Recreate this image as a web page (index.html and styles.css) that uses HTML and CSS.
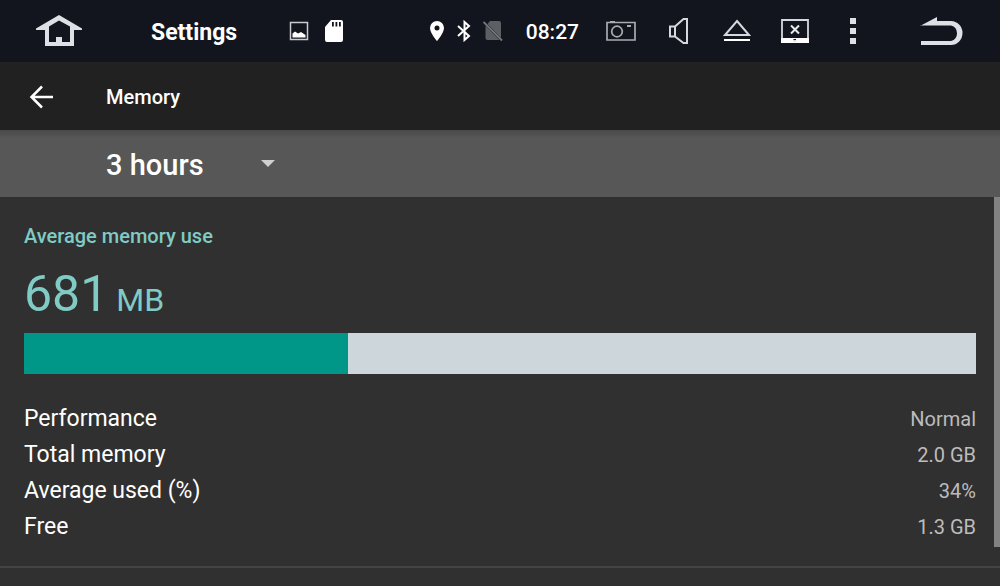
FILE: index.html
```html
<!DOCTYPE html>
<html lang="en">
<head>
<meta charset="utf-8">
<meta name="viewport" content="width=device-width, initial-scale=1">
<title>Memory</title>
<link rel="stylesheet" href="styles.css">
</head>
<body>
<header class="status">
  <button class="home" aria-label="Home">
    <svg width="46" height="32" viewBox="0 0 46 32"><path fill="#dde1e6" fill-rule="evenodd" d="M23 0 46 13.500v1.500h-8v16H9V15H0v-1.500ZM23 5.500 13 11.500v15.500h7v-5h6v5h8V11.500Z"/></svg>
  </button>
  <span class="app-name">Settings</span>
  <div class="notices">
    <svg width="20" height="20" viewBox="0 0 20 20"><path fill="none" stroke="#c9ccd0" stroke-width="1.500" d="M1.500 1.500h17v17h-17z"/><path fill="#fff" d="M3.500 16.500v-4l2.500-2 3 2 3-1.500 4.500 3v2.500Z"/></svg>
    <svg width="18" height="22" viewBox="0 0 18 22"><path fill="#fff" fill-rule="evenodd" d="M6 0h10q2 0 2 2v18q0 2-2 2H2q-2 0-2-2V7ZM7 2v4.500h1.800V2Zm3.500 0v4.500h1.800V2ZM14 2v4.500h1.800V2Z"/></svg>
  </div>
  <div class="signals">
    <svg width="16" height="22" viewBox="0 0 16 22"><path fill="#fff" fill-rule="evenodd" d="M8 1a7 7 0 0 0-7 7c0 5 7 13 7 13s7-8 7-13a7 7 0 0 0-7-7Zm0 4.500a2.500 2.500 0 1 1 0 5 2.500 2.500 0 0 1 0-5Z"/></svg>
    <svg width="14" height="22" viewBox="0 0 14 22"><path fill="none" stroke="#fff" stroke-width="2" d="m1 6 11 10-4.500 4V2L12 6 1 16"/></svg>
    <svg width="20" height="22" viewBox="0 0 20 22"><path fill="#5c5f64" d="M7 1h9q2 0 2 2v15L4.500 4ZM2.500 5.500 16.500 20H4.500q-2 0-2-2Z"/><path stroke="#74777c" stroke-width="1.800" d="m.5 2 18.500 18.500"/></svg>
  </div>
  <time class="clock">08:27</time>
  <nav class="tools">
    <button aria-label="Screenshot"><svg width="30" height="22" viewBox="0 0 30 22"><g fill="none" stroke="#a9acb0" stroke-width="1.700"><path d="M1 2.500h28v17.500H1z"/><circle cx="11" cy="11.500" r="5.300"/></g><path fill="#a9acb0" d="M4 1h5v2H4zM21 5h4v2h-4z"/></svg></button>
    <button aria-label="Volume"><svg width="20" height="26" viewBox="0 0 20 26"><path fill="none" stroke="#d5d8dc" stroke-width="2" d="M1 8.500h5v10H1zM6 8.500 14.500 1H18v24h-3.500L6 18.500"/></svg></button>
    <button aria-label="Eject"><svg width="28" height="24" viewBox="0 0 28 24"><path fill="none" stroke="#d5d8dc" stroke-width="2" d="M14 2 26 16H2Z"/><path fill="#fff" d="M1 20h26v2H1z"/></svg></button>
    <button aria-label="Screen off"><svg width="28" height="24" viewBox="0 0 28 24"><path fill="none" stroke="#d5d8dc" stroke-width="1.800" d="M1 1h26v21H1z"/><path fill="none" stroke="#e8eaec" stroke-width="2" d="m10 6.500 8 8m0-8-8 8"/><path fill="#fff" fill-rule="evenodd" d="M0 19h28v5H0Zm12.500 1v2.500h2.500V20Z"/></svg></button>
    <button aria-label="More"><svg width="8" height="26" viewBox="0 0 8 26"><path fill="#dde1e6" d="M1 0h6v6H1zM1 10h6v6H1zM1 20h6v6H1z"/></svg></button>
  </nav>
  <button class="back" aria-label="Back">
    <svg width="44" height="30" viewBox="0 0 44 30"><path fill="#dde1e6" d="M0 10 17 1v4h14a11.500 12 0 0 1 0 24H1v-4h30a8 8 0 0 0 0-15.500H0Z"/></svg>
  </button>
</header>
<div class="toolbar">
  <button class="up" aria-label="Navigate up">
    <svg width="26" height="24" viewBox="0 0 26 24"><path fill="none" stroke="#fff" stroke-width="2.500" d="M25 12H3.500M14 1.500 3.500 12 14 22.500"/></svg>
  </button>
  <h1 class="title">Memory</h1>
</div>
<div class="period">
  <select class="period-select" aria-label="Period">
    <option>3 hours</option>
    <option>6 hours</option>
    <option>12 hours</option>
    <option>1 day</option>
  </select>
  <svg class="caret" width="14" height="8" viewBox="0 0 14 8"><path fill="#d0d0d0" d="M0 0h14L7 7Z"/></svg>
</div>
<main class="content">
  <section class="summary">
    <h2 class="label">Average memory use</h2>
    <p class="amount">681<span class="unit"> MB</span></p>
    <div class="bar" role="img" aria-label="34% used"><div class="fill" style="width:34%"></div></div>
    <dl class="stats">
      <div class="row"><dt>Performance</dt><dd>Normal</dd></div>
      <div class="row"><dt>Total memory</dt><dd>2.0 GB</dd></div>
      <div class="row"><dt>Average used (%)</dt><dd>34%</dd></div>
      <div class="row"><dt>Free</dt><dd>1.3 GB</dd></div>
    </dl>
  </section>
  <div class="scroll-thumb"></div>
</main>
</body>
</html>
```
FILE: styles.css
```css
* {
  box-sizing: border-box;
}

body {
  margin: 0;
  min-height: 100vh;
  display: flex;
  flex-direction: column;
  background: #303030;
  color: #fff;
  font-family: Roboto, "Noto Sans", sans-serif;
}

button {
  display: flex;
  align-items: center;
  justify-content: center;
  padding: 0;
  border: 0;
  background: none;
}

h1, h2, p, dl, dd {
  margin: 0;
}

svg {
  display: block;
}

.status {
  display: flex;
  align-items: center;
  height: 62px;
  padding: 0 36px;
  background: #12151d;
}

.app-name {
  margin-left: 69px;
  padding-top: 2px;
  font-size: 23px;
  font-weight: 700;
}

.notices {
  display: flex;
  align-items: center;
  gap: 16px;
  margin-left: 52px;
}

.signals {
  display: flex;
  align-items: center;
  gap: 12px;
  margin-left: auto;
}

.clock {
  margin-left: 23px;
  padding-top: 2px;
  font-size: 21px;
  font-weight: 500;
}

.tools {
  display: flex;
  gap: 14px;
  margin-left: 20px;
}

.tools button {
  width: 44px;
  height: 44px;
}

.back {
  margin-left: 45px;
}

.toolbar {
  display: flex;
  align-items: center;
  height: 68px;
  padding: 2px 28px 0;
  background: #212121;
}

.title {
  margin-left: 52px;
  font-size: 20px;
  font-weight: 500;
}

.period {
  display: flex;
  align-items: center;
  height: 67px;
  padding-left: 106px;
  background: linear-gradient(#494949, #575757 8px);
}

.period-select {
  appearance: none;
  width: 170px;
  height: 48px;
  padding: 2px 0 0;
  border: 0;
  background: none;
  color: #fff;
  font: 500 29px Roboto, "Noto Sans", sans-serif;
}

.caret {
  margin-left: -15px;
  pointer-events: none;
}

.content {
  position: relative;
  flex: 1;
}

.summary {
  padding: 25px 24px 21px;
  border-bottom: 2px solid #444;
}

.label {
  color: #80cbc4;
  font-size: 20px;
  font-weight: 500;
  line-height: 28px;
}

.amount {
  margin: 14px 0 9px;
  color: #80cbc4;
  font-size: 50px;
  line-height: 60px;
  height: 60px;
}

.unit {
  font-size: 32px;
}

.bar {
  height: 41px;
  background: #cdd7db;
}

.fill {
  height: 100%;
  background: #009688;
}

.stats {
  margin-top: 27px;
}

.row {
  display: flex;
  align-items: center;
  justify-content: space-between;
  font-size: 23px;
  line-height: 36px;
}

.row dd {
  color: #bcbcbc;
  font-size: 20px;
}

.scroll-thumb {
  position: absolute;
  top: 0;
  right: 0;
  width: 6px;
  height: 90%;
  background: #828282;
}
```
